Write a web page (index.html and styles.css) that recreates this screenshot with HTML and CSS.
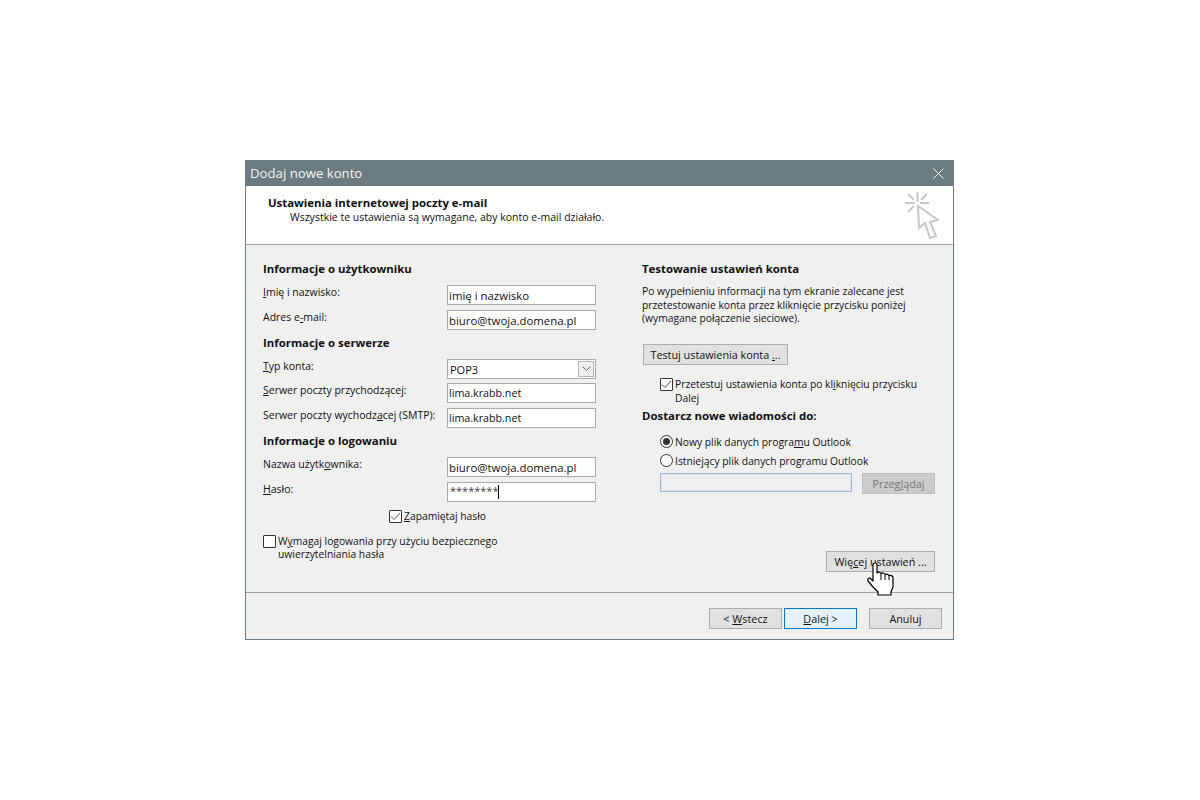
FILE: index.html
```html
<!DOCTYPE html>
<html lang="pl">
<head>
    <meta charset="UTF-8">
    <title>Dodaj nowe konto</title>
    <link rel="stylesheet" href="styles.css">
</head>
<body>

<div class="dialog">
    <div class="titlebar">
        <span class="title">Dodaj nowe konto</span>
        <svg class="close" width="11" height="11" viewBox="0 0 11 11"><path d="M0.5 0.5L10.5 10.5M10.5 0.5L0.5 10.5" stroke="#fff" stroke-width="1" fill="none"/></svg>
    </div>

    <div class="header">
        <div class="header-text">
            <div class="header-title">Ustawienia internetowej poczty e-mail</div>
            <div class="header-sub">Wszystkie te ustawienia są wymagane, aby konto e-mail działało.</div>
        </div>
        <svg class="wizard-icon" width="35" height="50" viewBox="0 0 35 50" fill="none" stroke="#c8c8c8" stroke-width="2">
            <path d="M13.5 2V12M1 13H11M16 13H25M4 4L10 10M23 4L17 10M4 22L10 16"/>
            <path d="M14 16L15 38L21 33L26 48L32 46L26 32L34 30Z"/>
        </svg>
    </div>

    <div class="content">
        <div class="col-left">
            <div class="section-head">Informacje o użytkowniku</div>
            <div class="row after-head"><label><u>I</u>mię i nazwisko:</label><div class="input large">imię i nazwisko</div></div>
            <div class="row"><label>Adres e<u>-</u>mail:</label><div class="input large">biuro@twoja.domena.pl</div></div>

            <div class="section-head">Informacje o serwerze</div>
            <div class="row after-head"><label><u>T</u>yp konta:</label>
                <div class="input select">POP3
                    <span class="select-arrow"><svg width="9" height="6" viewBox="0 0 9 6"><path d="M0.5 0.5L4.5 4.5L8.5 0.5" stroke="#666" fill="none"/></svg></span>
                </div>
            </div>
            <div class="row tight"><label><u>S</u>erwer poczty przychodzącej:</label><div class="input">lima.krabb.net</div></div>
            <div class="row"><label>Serwer poczty wychodz<u>a</u>cej (SMTP):</label><div class="input">lima.krabb.net</div></div>

            <div class="section-head">Informacje o logowaniu</div>
            <div class="row after-head"><label>Nazwa użytk<u>o</u>wnika:</label><div class="input large">biuro@twoja.domena.pl</div></div>
            <div class="row"><label><u>H</u>asło:</label><div class="input password"><span class="stars">********</span><span class="caret"></span></div></div>

            <div class="check remember">
                <span class="box"><svg width="11" height="9" viewBox="0 0 11 9"><path d="M1 4.5L4 7.5L10 1" stroke="#555" fill="none"/></svg></span>
                <span><u>Z</u>apamiętaj hasło</span>
            </div>
            <div class="check secure">
                <span class="box"></span>
                <span>W<u>y</u>magaj logowania przy użyciu bezpiecznego<br>uwierzytelniania hasła</span>
            </div>
        </div>

        <div class="col-right">
            <div class="section-head">Testowanie ustawień konta</div>
            <p class="info">Po wypełnieniu informacji na tym ekranie zalecane jest<br>przetestowanie konta przez kliknięcie przycisku poniżej<br>(wymagane połączenie sieciowe).</p>
            <button class="btn test-btn">Testuj ustawienia konta <u>.</u>..</button>
            <div class="check test-check">
                <span class="box"><svg width="11" height="9" viewBox="0 0 11 9"><path d="M1 4.5L4 7.5L10 1" stroke="#555" fill="none"/></svg></span>
                <span>Przetestuj ustawienia konta po kl<u>i</u>knięciu przycisku<br>Dalej</span>
            </div>
            <div class="section-head deliver">Dostarcz nowe wiadomości do:</div>
            <div class="radio first"><span class="dot on"></span><span>Nowy plik danych progra<u>m</u>u Outlook</span></div>
            <div class="radio"><span class="dot"></span><span>Istnie<u>j</u>ący plik danych programu Outlook</span></div>
            <div class="browse-row">
                <div class="path-input"></div>
                <button class="btn disabled">Przeg<u>l</u>ądaj</button>
            </div>
            <div class="more-row">
                <button class="btn more-btn">Wię<u>c</u>ej ustawień ...</button>
            </div>
        </div>
    </div>

    <div class="footer">
        <button class="btn">&lt; <u>W</u>stecz</button>
        <button class="btn primary"><u>D</u>alej &gt;</button>
        <button class="btn cancel">Anuluj</button>
    </div>

    <!-- mouse pointer over the button -->
    <svg class="hand" width="30" height="38" viewBox="0 0 30 38" fill="#fff" stroke="#000" stroke-width="1.2" stroke-linejoin="round">
        <path d="M7 5Q7 3 9 3Q11 3 11 5V13Q13 11 15 13.5Q17 12 19 14.5Q21 13.5 23 15.5Q27 15 27 18V27L25 32V35H12V32L7 27L2 21Q1 18 4 18L7 21Z"/>
        <path d="M15 14V20M19 15V20M23 16V20" fill="none" stroke-width="1"/>
    </svg>
</div>

</body>
</html>
```

FILE: styles.css
```css
body {
    margin: 0;
    background-color: #fff;
    font-family: "Open Sans", "Liberation Sans", sans-serif;
    font-size: 10.3px;
    color: #111;
}

.dialog {
    position: relative;
    box-sizing: border-box;
    width: 709px;
    height: 480px;
    margin: 160px 0 0 245px;
    border: 1px solid #6b7b80;
    border-top: none;
    background-color: #f0f0f0;
    display: flex;
    flex-direction: column;
}

.titlebar {
    height: 26px;
    margin: 0 -1px;
    padding: 0 10px 0 5px;
    background-color: #6b7b80;
    display: flex;
    align-items: center;
    justify-content: space-between;
    flex-shrink: 0;
}

.title {
    font-size: 13.2px;
    color: #f4f4f4;
}

.close {
    display: block;
}

.header {
    height: 58px;
    flex-shrink: 0;
    background-color: #fff;
    border-bottom: 1px solid #a0a0a0;
    display: flex;
    justify-content: space-between;
}

.header-text {
    padding: 9px 0 0 22px;
}

.header-title {
    font-size: 11.4px;
    font-weight: bold;
    line-height: 16px;
}

.header-sub {
    padding-left: 22px;
    font-size: 10.5px;
    line-height: 13px;
}

.wizard-icon {
    margin: 4px 14px 0 0;
}

.content {
    flex: 1;
    display: flex;
    padding: 16px 17px 0;
    border-bottom: 1px solid #a0a0a0;
}

.col-left {
    width: 379px;
}

.col-right {
    flex: 1;
}

.section-head {
    height: 16px;
    margin-top: 5px;
    font-size: 11.4px;
    font-weight: bold;
    line-height: 16px;
}

.col-left > .section-head:first-child,
.col-right > .section-head:first-child {
    margin-top: 0;
}

.row {
    display: flex;
    justify-content: space-between;
    width: 333px;
    height: 20px;
    margin-top: 5px;
}

.row.after-head {
    margin-top: 8px;
}

.row.tight {
    margin-top: 4px;
}

.row label {
    font-size: 10.5px;
    line-height: 14px;
}

.input {
    box-sizing: border-box;
    width: 149px;
    height: 20px;
    border: 1px solid #a9a9a9;
    background-color: #fff;
    padding-left: 1px;
    font-size: 10.7px;
    position: relative;
    display: flex;
    align-items: center;
}

.input.large {
    font-size: 11.4px;
}

.input.select {
    padding-left: 2px;
    font-size: 11px;
}

.select-arrow {
    position: absolute;
    right: 1px;
    top: 1px;
    width: 16px;
    height: 16px;
    border: 1px solid #b5b5b5;
    box-sizing: border-box;
    background-color: #f0f0f0;
    display: flex;
    align-items: center;
    justify-content: center;
}

.input.password {
    padding-left: 2px;
    font-size: 11px;
}

.stars {
    margin-top: -3px;
    color: #444;
}

.caret {
    width: 1px;
    height: 14px;
    background-color: #000;
}

.check {
    display: flex;
    gap: 2px;
    line-height: 13.5px;
}

.box {
    box-sizing: border-box;
    width: 13px;
    height: 13px;
    flex-shrink: 0;
    border: 1px solid #333;
    border-radius: 1px;
    background-color: #fff;
    display: flex;
    align-items: center;
    justify-content: center;
}

.remember {
    margin: 8px 0 0 126px;
}

.secure {
    margin-top: 11px;
}

.info {
    height: 40px;
    margin: 8px 0 0;
    line-height: 13.5px;
}

.btn {
    box-sizing: border-box;
    height: 21px;
    width: 73px;
    padding: 0;
    border: 1px solid #adadad;
    background-color: #e1e1e1;
    font-family: inherit;
    font-size: 10.8px;
    color: #111;
}

.test-btn {
    display: block;
    width: 145px;
    margin: 19px 0 0 1px;
}

.test-check {
    margin: 13px 0 0 18px;
}

.section-head.deliver {
    margin-top: 3px;
}

.radio {
    display: flex;
    gap: 2px;
    align-items: center;
    height: 19px;
    margin-left: 18px;
}

.radio.first {
    margin-top: 8px;
}

.dot {
    box-sizing: border-box;
    width: 13px;
    height: 13px;
    border: 1px solid #333;
    border-radius: 50%;
    background-color: #fff;
    display: flex;
    align-items: center;
    justify-content: center;
}

.dot.on::after {
    content: "";
    width: 7px;
    height: 7px;
    border-radius: 50%;
    background-color: #333;
}

.browse-row {
    display: flex;
    justify-content: space-between;
    width: 275px;
    margin: 3px 0 0 18px;
}

.path-input {
    box-sizing: border-box;
    width: 192px;
    height: 19px;
    border: 1px solid #9ebbd6;
    box-shadow: inset 0 0 0 1px #dce6ee;
    background-color: #f0f0f0;
}

.disabled {
    border-color: #bfbfbf;
    background-color: #ccc;
    color: #777;
}

.more-row {
    display: flex;
    justify-content: flex-end;
    width: 293px;
    margin-top: 57px;
}

.more-btn {
    width: 109px;
}

.footer {
    height: 46px;
    flex-shrink: 0;
    display: flex;
    align-items: flex-start;
    gap: 2px;
    padding: 15px 11px 0 463px;
    box-sizing: border-box;
}

.primary {
    border-color: #0078d7;
    background-color: #e5f1fb;
}

.cancel {
    margin-left: 10px;
}

.hand {
    position: absolute;
    left: 620px;
    top: 400px;
}
```
